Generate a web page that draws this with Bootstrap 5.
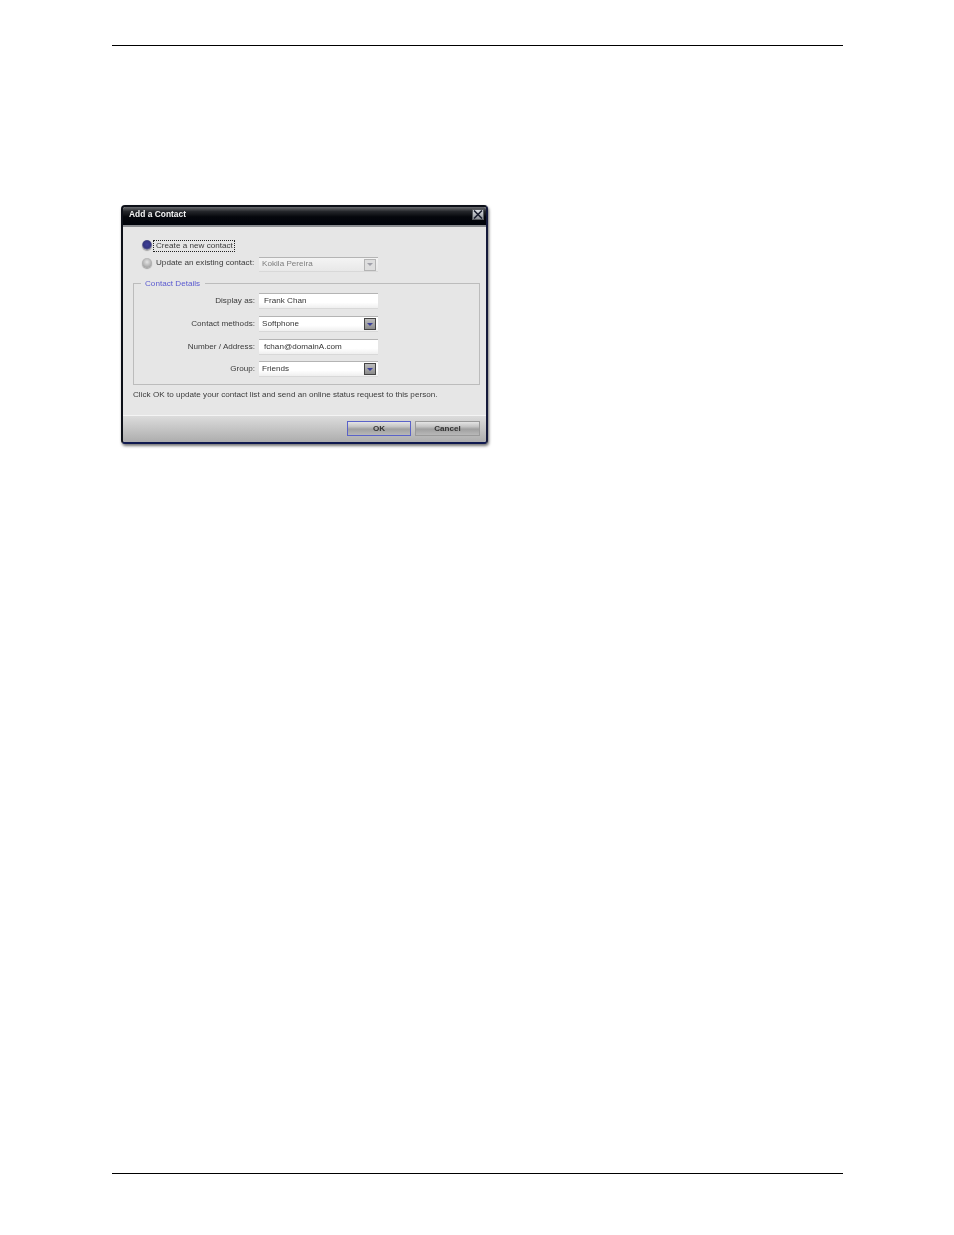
<!DOCTYPE html>
<html lang="en">
<head>
<meta charset="utf-8">
<title>Add a Contact</title>
<link href="https://cdn.jsdelivr.net/npm/bootstrap@5.3.0/dist/css/bootstrap.min.css" rel="stylesheet">
<style>
html,body{background:#fff;height:100%}
.sheet{width:731px;margin-left:112px;height:1235px;padding-top:45px;overflow:hidden}
.rule-line{border-top:1px solid #000;height:0}
.rule-end{margin-top:729px}
.dlg{width:367px;height:239px;margin-top:159px;margin-left:9px;background:#e6e6e6;border:2px solid #0d1018;border-bottom-color:#101a50;border-right-color:#14193a;border-radius:4px;box-shadow:1px 2px 3px rgba(0,0,0,.55);font-family:"Liberation Sans",Arial,sans-serif;font-size:8.1px;color:#3a3a3a;letter-spacing:.02px;overflow:hidden;filter:blur(.35px)}
.dlg-title{height:20px;padding-bottom:3px;background:linear-gradient(#6a6c70 0,#24262a 25%,#05070c 55%,#00030a 100%);color:#f4f4f4;font-size:8.4px;font-weight:700;padding-left:6px;padding-right:2px;border-bottom:2px solid #8a8c90}
.x-btn{width:12px;height:11px;background:linear-gradient(#dfe2e6,#8d9096);border:1px solid #55585c}
.dlg-main{height:188px;padding:9px 6px 0 10px}
.radio-row{height:18px;padding-left:9px}
.radio-dot{width:10px;height:10px;border-radius:50%;flex:none;margin-right:2px;background:radial-gradient(circle at 50% 40%,#e4e4e4,#a4a4a4 70%,#8a8a8a);box-shadow:0 1px 1px rgba(0,0,0,.3)}
.radio-on{margin-right:1px;background:radial-gradient(circle at 50% 45%,#3e3f9a 0,#34357f 50%,#9a9aa8 75%,#b4b4b8)}
.focus-box{border:1px dotted #222;padding:0 0 0 2px;height:12px;line-height:10px;width:82px;white-space:nowrap;overflow:hidden;margin-top:2px}
.radio-lbl{width:101px;padding-left:2px;white-space:nowrap}
.fld{width:119px;height:16px;margin-left:4px;background:linear-gradient(#fff 0,#fff 60%,#efefef 100%);border-top:1px solid #b4b4b4;border-bottom:1px solid #d8d8d8;padding:0 2px 0 3px;color:#333;white-space:nowrap}
.fld-off{color:#7d7d7d;background:linear-gradient(#f4f4f4,#e8e8e8);height:15px;margin-top:3px}
.fld-text{padding-left:5px}
.arrow-btn{width:12px;height:12px;margin-left:auto;background:linear-gradient(#bcbcbc,#8c8c8c);border:1px solid #444;flex:none}
.arrow-off{background:#dedede;border-color:#b4b4b4}
.tri{width:0;height:0;border-left:3px solid transparent;border-right:3px solid transparent;border-top:3px solid #3a3f9a}
.arrow-off .tri{border-top-color:#a0a0a8}
.group-box{height:102px;margin-top:11px;border:1px solid #bcbcbc;position:relative;padding-top:9px}
.legend-txt{position:absolute;left:7px;top:-5px;line-height:10px;background:#e6e6e6;padding:0 5px 0 4px;color:#5a5ad0}
.form-line{height:22.7px;padding-bottom:6px}
.lab-cell{width:121px;text-align:right;white-space:nowrap;flex:none}
.note-line{margin-top:5px;white-space:nowrap;height:10px;line-height:10px}
.dlg-foot{height:27px;background:linear-gradient(#dcdcdc,#adadad);border-top:1px solid #f4f4f4;padding-right:6px;padding-bottom:2px}
.act-btn{width:65px;height:15px;background:linear-gradient(#e4e4e4 0,#c4c4c4 35%,#a0a0a0 55%,#b8b8b8 100%);color:#333;font-weight:700;border:1px solid #9a9a9a;line-height:13px;padding:0}
.act-ok{width:64px;border-color:#5a62c8;margin-right:4px}
</style>
</head>
<body class="m-0 p-0">
<div class="sheet">
  <div class="rule-line"></div>
  <div class="dlg">
    <div class="dlg-title d-flex align-items-center justify-content-between">
      <span>Add a Contact</span>
      <span class="x-btn d-flex align-items-center justify-content-center">
        <svg width="10" height="9" viewBox="0 0 10 9"><path d="M1 0.5L9 8.5M9 0.5L1 8.5" stroke="#1c2030" stroke-width="1.6" fill="none"/></svg>
      </span>
    </div>
    <div class="dlg-main">
      <div class="radio-row d-flex align-items-center"><span class="radio-dot radio-on"></span><span class="focus-box">Create a new contact</span></div>
      <div class="radio-row d-flex align-items-center">
        <span class="radio-dot"></span><span class="radio-lbl">Update an existing contact:</span>
        <div class="fld fld-off d-flex align-items-center"><span>Kokila Pereira</span><span class="arrow-btn arrow-off d-flex align-items-center justify-content-center"><span class="tri"></span></span></div>
      </div>
      <div class="group-box">
        <span class="legend-txt">Contact Details</span>
        <div class="form-line d-flex align-items-center"><span class="lab-cell">Display as:</span><div class="fld fld-text d-flex align-items-center">Frank Chan</div></div>
        <div class="form-line d-flex align-items-center"><span class="lab-cell">Contact methods:</span><div class="fld d-flex align-items-center"><span>Softphone</span><span class="arrow-btn d-flex align-items-center justify-content-center"><span class="tri"></span></span></div></div>
        <div class="form-line d-flex align-items-center"><span class="lab-cell">Number / Address:</span><div class="fld fld-text d-flex align-items-center">fchan@domainA.com</div></div>
        <div class="form-line d-flex align-items-center"><span class="lab-cell">Group:</span><div class="fld d-flex align-items-center"><span>Friends</span><span class="arrow-btn d-flex align-items-center justify-content-center"><span class="tri"></span></span></div></div>
      </div>
      <div class="note-line">Click OK to update your contact list and send an online status request to this person.</div>
    </div>
    <div class="dlg-foot d-flex align-items-center justify-content-end">
      <button type="button" class="act-btn act-ok">OK</button>
      <button type="button" class="act-btn">Cancel</button>
    </div>
  </div>
  <div class="rule-line rule-end"></div>
</div>
<script src="https://cdn.jsdelivr.net/npm/bootstrap@5.3.0/dist/js/bootstrap.bundle.min.js"></script>
</body>
</html>
